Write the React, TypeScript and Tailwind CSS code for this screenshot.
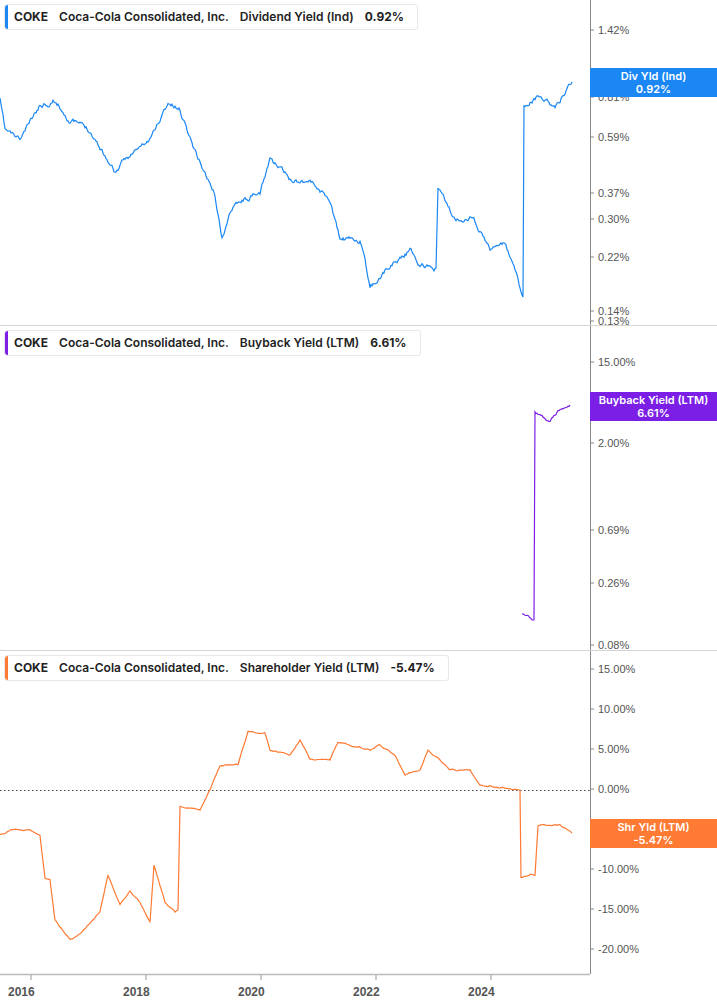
import React from "react";

type Pt = [number, number];

// deterministic jitter so the line looks like daily data
function series(keys: Pt[], amp: number, seed: number, step = 1): string {
  let s = seed;
  const rnd = () => {
    s = (s * 16807) % 2147483647;
    return s / 2147483647 - 0.5;
  };
  const out: string[] = [];
  let walk = 0;
  for (let i = 0; i < keys.length - 1; i++) {
    const [x0, y0] = keys[i];
    const [x1, y1] = keys[i + 1];
    const dx = x1 - x0;
    if (dx < 3) {
      out.push(`${x0},${y0}`, `${x1},${y1}`);
      continue;
    }
    for (let x = x0; x < x1; x += step) {
      const t = (x - x0) / dx;
      walk = walk * 0.8 + rnd() * amp;
      out.push(`${x.toFixed(1)},${(y0 + (y1 - y0) * t + walk).toFixed(1)}`);
    }
  }
  const last = keys[keys.length - 1];
  out.push(`${last[0]},${last[1]}`);
  return "M" + out.join(" L");
}

const DIV: Pt[] = [[0,100],[5,130],[20,140],[40,105],[55,100],[70,120],[90,130],[115,172],[130,155],[150,140],[168,103],[180,110],[195,150],[215,195],[222,238],[235,200],[260,195],[270,158],[290,180],[310,180],[330,200],[340,240],[360,240],[370,288],[390,265],[410,250],[420,265],[436,268],[438,188],[455,220],[470,215],[490,248],[505,245],[515,270],[522,295],[523,297],[524,105],[540,95],[555,108],[565,92],[572,82]];
const BUY: Pt[] = [[522,615],[532,620],[534,620],[535,412],[550,422],[560,410],[570,405]];
const SHR: Pt[] = [[0,835],[10,830],[30,830],[40,836],[45,878],[50,880],[55,920],[70,940],[80,935],[100,912],[108,875],[120,905],[130,890],[140,902],[150,922],[154,865],[165,902],[175,912],[178,910],[180,806],[200,810],[210,790],[220,766],[238,765],[248,732],[265,732],[270,750],[290,755],[300,740],[310,760],[330,760],[338,742],[370,750],[380,745],[395,755],[405,776],[420,770],[428,750],[440,760],[450,770],[470,770],[480,785],[520,790],[521,878],[530,874],[535,875],[538,825],[560,825],[572,833]];

const AX: { y: number; t: string }[] = [
  { y: 30, t: "1.42%" }, { y: 73, t: "1.00%" }, { y: 97, t: "0.81%" }, { y: 137, t: "0.59%" },
  { y: 193, t: "0.37%" }, { y: 219, t: "0.30%" }, { y: 257, t: "0.22%" }, { y: 311, t: "0.14%" },
  { y: 321, t: "0.13%" }, { y: 362, t: "15.00%" }, { y: 409, t: "6.61%" }, { y: 443, t: "2.00%" },
  { y: 530, t: "0.69%" }, { y: 583, t: "0.26%" }, { y: 645, t: "0.08%" }, { y: 669, t: "15.00%" },
  { y: 709, t: "10.00%" }, { y: 749, t: "5.00%" }, { y: 789, t: "0.00%" }, { y: 829, t: "-5.00%" },
  { y: 869, t: "-10.00%" }, { y: 909, t: "-15.00%" }, { y: 949, t: "-20.00%" },
];

const YEARS = ["2016", "2018", "2020", "2022", "2024"];

function Header({ bar, metric, value }: { bar: string; metric: string; value: string }) {
  return (
    <div className="relative flex h-[26px] w-fit items-center gap-[11px] rounded-[3px] border border-[#e8e8e8] bg-white pl-[9px] pr-[13px] text-[12px] font-semibold text-[#222]">
      <span className={`absolute left-0 top-0 h-full w-[3px] rounded-l-[3px] ${bar}`} />
      <span className="font-bold">COKE</span>
      <span>Coca-Cola Consolidated, Inc.</span>
      <span>{metric}</span>
      <span className="font-bold">{value}</span>
    </div>
  );
}

function Badge({ className, a, b }: { className: string; a: string; b: string }) {
  return (
    <div className={`absolute right-0 flex h-[29px] w-[127px] flex-col items-center justify-center text-[11px] font-semibold leading-[13px] text-white ${className}`}>
      <span>{a}</span>
      <span>{b}</span>
    </div>
  );
}

export default function App() {
  return (
    <div className="relative h-[1005px] w-[717px] overflow-hidden bg-white" style={{ fontFamily: "Inter, 'Noto Sans', sans-serif" }}>
      <svg className="absolute inset-0" width="717" height="1005">
        <line x1="590.5" y1="0" x2="590.5" y2="974" stroke="#888" />
        <line x1="0" y1="974.5" x2="590" y2="974.5" stroke="#bbb" strokeWidth="1.5" />
        <line x1="0" y1="790.5" x2="590" y2="790.5" stroke="#444" strokeDasharray="1.5 2.5" />
        {[31, 146, 261, 376, 491].map((x) => (
          <line key={x} x1={x} y1="975" x2={x} y2="980" stroke="#999" />
        ))}
        {AX.map((a) => (
          <line key={a.y} x1="591" y1={a.y} x2="594" y2={a.y} stroke="#888" />
        ))}
        {AX.map((a) => (
          <text key={a.t + a.y} x="598" y={a.y + 4} fontSize="11" fill="#555" fontFamily="'Liberation Sans', Arial, sans-serif">
            {a.t}
          </text>
        ))}
        <path d={series(DIV, 4, 11)} fill="none" stroke="#1a87f5" strokeWidth="1.2" />
        <path d={series(BUY, 2, 23)} fill="none" stroke="#7b1fe6" strokeWidth="1.2" />
        <path d={series(SHR, 1.2, 37, 1.5)} fill="none" stroke="#ff7a33" strokeWidth="1.2" />
      </svg>

      <div className="relative flex flex-col">
        <section className="h-[326px] border-b border-[#d4d4d4] p-1">
          <Header bar="bg-[#1a87f5]" metric="Dividend Yield (Ind)" value="0.92%" />
          <Badge className="top-[68px] bg-[#1a87f5]" a="Div Yld (Ind)" b="0.92%" />
        </section>
        <section className="h-[325px] border-b border-[#d4d4d4] p-1">
          <Header bar="bg-[#7b1fe6]" metric="Buyback Yield (LTM)" value="6.61%" />
          <Badge className="top-[392px] bg-[#7b1fe6]" a="Buyback Yield (LTM)" b="6.61%" />
        </section>
        <section className="h-[323px] p-1">
          <Header bar="bg-[#ff7a33]" metric="Shareholder Yield (LTM)" value="-5.47%" />
          <Badge className="top-[819px] bg-[#ff7a33]" a="Shr Yld (LTM)" b="-5.47%" />
        </section>
        <div className="flex w-[590px] pl-[8px] pt-[9px]" style={{ fontFamily: "'Liberation Sans', Arial, sans-serif" }}>
          {YEARS.map((t) => (
            <span key={t} className="w-[115px] text-[12px] font-bold text-[#555]">
              {t}
            </span>
          ))}
        </div>
      </div>
    </div>
  );
}
